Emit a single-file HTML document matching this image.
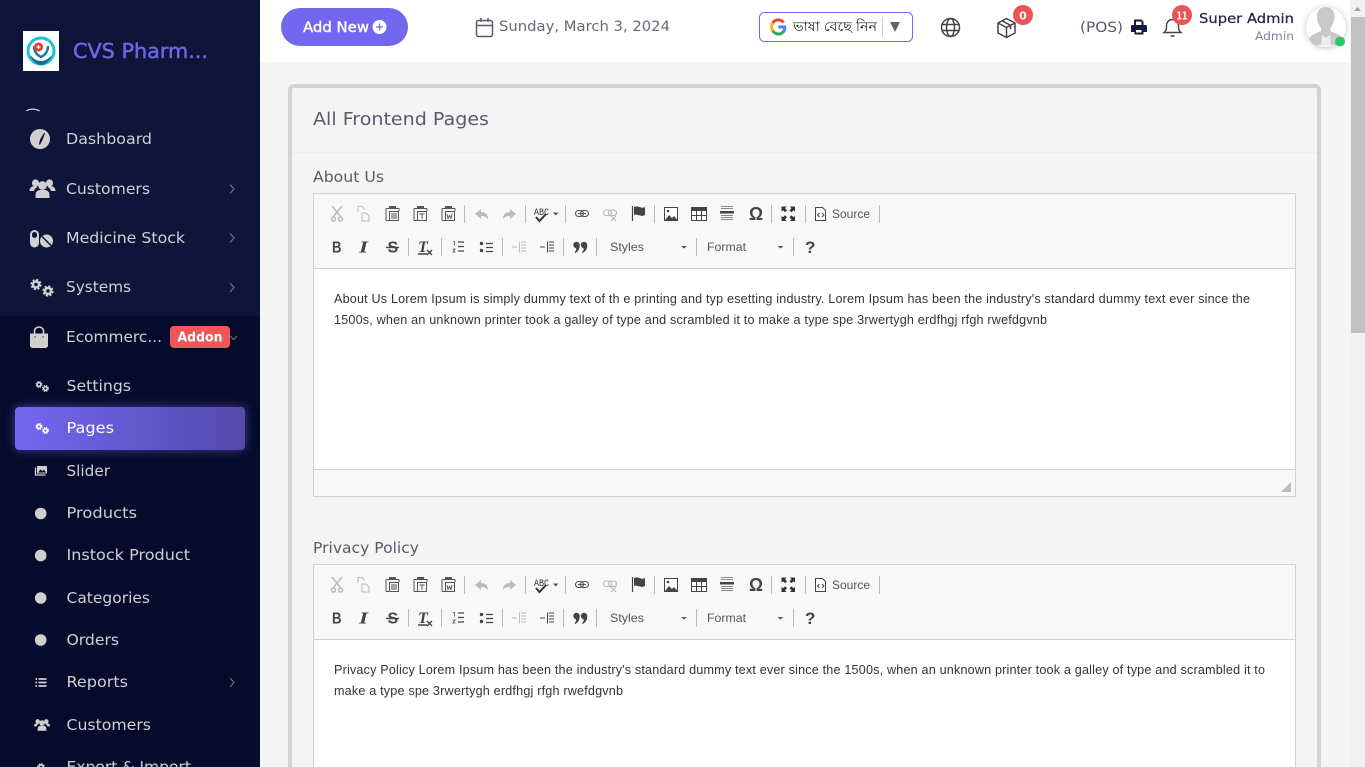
<!DOCTYPE html>
<html lang="en">
<head>
<meta charset="utf-8">
<title>All Frontend Pages</title>
<style>
html,body{margin:0;padding:0;width:1365px;height:767px;overflow:hidden;background:#f5f5f5}
svg{display:block}
text{white-space:pre}
.m{font-family:"DejaVu Sans","Liberation Sans",sans-serif}
.side{font-size:15.5px;fill:#cfcfd4}
.sub{font-size:15.5px;fill:#cfcfd4}
.e{font-family:"Liberation Sans",sans-serif;font-size:12.6px;fill:#333}
.t{font-family:"Liberation Sans",sans-serif;font-size:12px;fill:#555}
</style>
</head>
<body>
<svg xmlns="http://www.w3.org/2000/svg" width="1365" height="767" viewBox="0 0 1365 767">
<defs>
<linearGradient id="act" x1="0" x2="1" y1="0" y2="0"><stop offset="0" stop-color="#7367f0"/><stop offset="1" stop-color="#5549ad"/></linearGradient>
<g id="cog"><circle r="3" fill="none" stroke="currentColor" stroke-width="2.4"/><circle r="4.7" fill="none" stroke="currentColor" stroke-width="1.8" stroke-dasharray="2.2 1.5"/></g>
<g id="users" fill="currentColor">
<circle cx="-7" cy="-5" r="3.6"/><circle cx="7" cy="-5" r="3.6"/><circle cx="0" cy="-2.5" r="4.4"/>
<path d="M-13 3c0-3 2-5 5-5h2l1 1c-2 1-3 2-3.500 4zM13 3c0-3-2-5-5-5H6L5-1c2 1 3 2 3.500 4zM-7 10V7c0-3.500 2.500-5 5-5h4c2.500 0 5 1.500 5 5v3z"/>
</g>
<g id="tb">
<!-- row 1 -->
<g fill="none" stroke="#bbb" stroke-width="1.500">
<path d="M332 206l8.500 10.500M342 206l-8.500 10.500"/><circle cx="333.500" cy="219" r="2"/><circle cx="340.500" cy="219" r="2"/>
<path d="M358 212v-5.500h4l3 3M362 213h4l3 3v5h-7z" stroke-width="1"/>
</g>
<g fill="none" stroke="#555" stroke-width="1">
<path d="M389 208.500h-2.500c-.5 0-.5 0-.5 .5v11c0 .5 0 .5 .5 .5h3M396 208.500h2.500c.5 0 .5 0 .5 .5v2"/>
<path d="M417 208.500h-2.500c-.5 0-.5 0-.5 .5v11c0 .5 0 .5 .5 .5h3M424 208.500h2.500c.5 0 .5 0 .5 .5v2"/>
<path d="M445 208.500h-2.500c-.5 0-.5 0-.5 .5v11c0 .5 0 .5 .5 .5h3M452 208.500h2.500c.5 0 .5 0 .5 .5v2"/>
<rect x="389.500" y="211.500" width="9" height="9"/><rect x="417.500" y="211.500" width="9" height="9"/><rect x="445.500" y="211.500" width="9" height="9"/>
<path d="M391 214h6M391 216h6M391 218h6M419.500 214h5M422 214v5M447 214l1 4.500 1.500-3 1.500 3 1-4.500" stroke-width=".9"/>
</g>
<rect x="389" y="206" width="7" height="3" fill="#555"/><rect x="417" y="206" width="7" height="3" fill="#555"/><rect x="445" y="206" width="7" height="3" fill="#555"/>
<path d="M475 214l6-5v3c4 0 7 2 7 7-2-2.500-4-3-7-3v3z" fill="#bbb"/>
<path d="M516 214l-6-5v3c-4 0-7 2-7 7 2-2.500 4-3 7-3v3z" fill="#bbb"/>
<path d="M536 217l3.500 4 6.500-7" fill="none" stroke="#333" stroke-width="2"/>
<path d="M553 212.500h5.500l-2.750 3z" fill="#555"/>
<g fill="none" stroke="#555" stroke-width="1.100"><rect x="575.500" y="210.500" width="8" height="6" rx="3"/><rect x="580.500" y="210.500" width="8" height="6" rx="3"/><path d="M578 213.500h8"/></g>
<g fill="none" stroke="#bbb" stroke-width="1.100"><rect x="603.500" y="210" width="8" height="5.500" rx="2.700"/><rect x="608.500" y="210" width="8" height="5.500" rx="2.700"/><path d="M611 216l5 5M616 216l-5 5"/></g>
<path d="M632.500 206v15" stroke="#444" stroke-width="1.200"/><path d="M634 207c3-1.500 5 0 7 .5s3 0 4-.5v8c-2 1-3 1-5 .5s-4-1.500-6-.5z" fill="#444"/>
<rect x="664.500" y="207.500" width="13" height="13" fill="#fff" stroke="#444"/><path d="M665 220l4-5 3 3 2-2 3.500 4z" fill="#444"/><circle cx="668" cy="211" r="1.300" fill="#444"/>
<rect x="691.500" y="207.500" width="15" height="13" fill="#fff" stroke="#444"/><rect x="691" y="207" width="16" height="4" fill="#444"/><path d="M696.500 211v9M701.500 211v9M692 215.500h14" stroke="#444"/>
<path d="M721 206.500h12M721 208.500h12" stroke="#888"/><rect x="720" y="211" width="14" height="2.500" fill="#444"/><path d="M721 215.500h12M721 217.500h12M721 219.500h12" stroke="#888"/>
<path d="M782 207h3.500l-1.200 1.200 2 2-1.300 1.300-2-2L782 210.500zM794.500 207h-3.500l1.200 1.200-2 2 1.300 1.300 2-2 1 1zM782 220.500H785.500l-1.200-1.200 2-2-1.300-1.300-2 2-1-1zM794.500 220.500h-3.500l1.200-1.200-2-2 1.300-1.300 2 2 1-1z" fill="#333" stroke="#333"/>
<path d="M815.500 207.500h7l3 3v10h-10z" fill="#fff" stroke="#444"/><path d="M819.500 213l-2 2 2 2M822 213l2 2-2 2" fill="none" stroke="#444"/>
<!-- row 2 -->
<path d="M418 254h9" stroke="#444" stroke-width="1.500"/>
<path d="M427 250l5 5M432 250l-5 5" stroke="#444" stroke-width="1.400"/>
<path d="M386 247.500h13" stroke="#444" stroke-width="1.400"/>
<path d="M458 242h6M458 246.500h6M458 251h6M486 243.500h7M486 247.500h7M486 251.500h7" stroke="#444" stroke-width="1.300"/>
<path d="M453 241.500h1.500v4M452.500 249h2.500l-2 3h2.500" fill="none" stroke="#444" stroke-width=".8"/>
<circle cx="481.500" cy="243.500" r="1.700" fill="#444"/><circle cx="481.500" cy="250.500" r="1.700" fill="#444"/>
<g stroke="#bbb"><path d="M519.500 241.500v11M521 242h5M521 245h5M521 248h5M521 251h5M512 247h5"/></g>
<g stroke="#444"><path d="M547.500 241.500v11M549 242h5M549 245h5M549 248h5M549 251h5M540 247h5"/></g>
<circle cx="576.500" cy="245" r="3.200" fill="#444"/><circle cx="584" cy="245" r="3.200" fill="#444"/>
<path d="M579.700 245c.3 3.500-1.500 6.500-4.500 8l-.7-1c1.500-1 2-2.500 1.500-4zM587.200 245c.3 3.500-1.500 6.500-4.500 8l-.7-1c1.500-1 2-2.500 1.500-4z" fill="#444"/>
<path d="M681 246h6l-3 2.500zM777.500 246h6l-3 2.500z" fill="#555"/>
<!-- separators -->
<path d="M464.500 205v18M525.500 205v18M565.500 205v18M654.500 205v18M771.500 205v18M805.500 205v18M879.500 205v18M408.500 238v18M441.500 238v18M502.500 238v18M563.500 238v18M596.500 238v18M696.500 238v18M793.500 238v18" stroke="#bcbcbc"/>
</g>
</defs>

<!-- content background -->
<rect width="1365" height="767" fill="#f5f5f5"/>

<!-- header -->
<rect x="260" width="1090" height="62" fill="#fff"/>
<rect x="281" y="8" width="127" height="38" rx="19" fill="#7367f0"/>
<text class="m" x="303" y="32" font-size="14" fill="#fff" stroke="#fff" stroke-width=".4" textLength="66" lengthAdjust="spacingAndGlyphs">Add New</text>
<circle cx="379.500" cy="27" r="7" fill="#fff"/><path d="M376 27h7M379.500 23.500v7" stroke="#7367f0" stroke-width="1.200"/>
<g fill="none" stroke="#5d596c" stroke-width="1.500"><rect x="476.500" y="20.500" width="16" height="16" rx="2"/><path d="M476.500 25.500h16M481 18v4M488 18v4"/></g>
<text class="m" x="499" y="31" font-size="14.500" fill="#6a6778" textLength="171" lengthAdjust="spacingAndGlyphs">Sunday, March 3, 2024</text>

<rect x="759.500" y="12.500" width="153" height="29" rx="5" fill="#fff" stroke="#7367f0"/>
<g fill="none" stroke-width="3">
<path d="M783.500 22.500a6.500 6.500 0 0 0-10.800 .5" stroke="#ea4335"/>
<path d="M772.700 23a6.500 6.500 0 0 0 0 7.500" stroke="#fbbc05"/>
<path d="M772.700 30.500a6.500 6.500 0 0 0 10 2" stroke="#34a853"/>
<path d="M782.700 32.500a6.500 6.500 0 0 0 2-5.500h-6.500" stroke="#4285f4"/>
</g>
<text x="793" y="31" font-size="13.500" fill="#222" font-family="'Liberation Sans','Noto Sans CJK SC',sans-serif" textLength="84" lengthAdjust="spacingAndGlyphs">ভাষা বেছে নিন</text>
<path d="M882.500 17v20" stroke="#ccc"/>
<path d="M890 22h10l-5 10z" fill="#666"/>

<g fill="none" stroke="#444" stroke-width="1.500"><circle cx="950.500" cy="27.500" r="9"/><ellipse cx="950.500" cy="27.500" rx="4" ry="9"/><path d="M942 24.500h17M942 30.500h17"/></g>
<g fill="none" stroke="#444" stroke-width="1.500" stroke-linejoin="round"><path d="M1006.500 18.500l8.500 4.500v10l-8.500 4.500-8.500-4.500v-10zM998 23l8.500 4.500 8.500-4.500M1006.500 27.500v10M1002 20.800l8.500 4.500v4"/></g>
<circle cx="1023" cy="15" r="10" fill="#ea5455"/>
<text class="m" x="1023" y="19.500" font-size="11" font-weight="700" fill="#fff" text-anchor="middle">0</text>

<text class="m" x="1080" y="32" font-size="14.500" fill="#5d596c" textLength="43" lengthAdjust="spacingAndGlyphs">(POS)</text>
<path d="M1134 25v-5.500h7.500l2 2V25h2c1 0 1.500.7 1.500 1.500V32h-3.500v2.500h-9V32H1131v-5.500c0-.8.500-1.500 1.500-1.500zm2-3.500V25h5.500v-3.500zm0 8.500v2.500h5.500V30z" fill="#14193f" fill-rule="evenodd"/>
<g fill="none" stroke="#444" stroke-width="1.400"><path d="M1164 32.500c2-1.500 2.500-3 2.500-7a6 6 0 0 1 12 0c0 4 .5 5.500 2.500 7z"/><path d="M1170.500 36h4" stroke-width="1.500"/></g>
<circle cx="1182" cy="15" r="10" fill="#ea5455"/>
<text class="m" x="1182" y="19.500" font-size="10.500" font-weight="700" fill="#fff" text-anchor="middle" textLength="11" lengthAdjust="spacingAndGlyphs">11</text>
<text class="m" x="1199" y="23" font-size="13.500" fill="#1c2248" stroke="#1c2248" stroke-width=".2" textLength="95" lengthAdjust="spacingAndGlyphs">Super Admin</text>
<text class="m" x="1255" y="40" font-size="11.500" fill="#85849a" textLength="39" lengthAdjust="spacingAndGlyphs">Admin</text>
<circle cx="1326" cy="27" r="20" fill="#fff" style="filter:drop-shadow(0 1px 3px rgba(0,0,0,.25))"/>
<path d="M1326 7c5.500 0 8.500 4 8.500 9.500 0 5-2 9-4 11.500v3l9 4 3 4-4.500 6h-24.500l-4.500-6 3-4 9-4v-3c-2-2.500-4-6.500-4-11.500 0-5.500 3-9.500 8.500-9.500z" fill="#c9c9c9"/>
<path d="M1322 35l4 3 4-3 1 11h-10z" fill="#eee"/>
<circle cx="1340" cy="41.500" r="5" fill="#28c76f"/>

<!-- scrollbar -->
<rect x="1350" width="15" height="767" fill="#f1f1f1"/>
<rect x="1351" y="17" width="14" height="316" fill="#c1c1c1"/>
<path d="M1354 11l3.500-4 3.500 4z" fill="#a3a3a3"/>

<!-- card -->
<rect x="290" y="86" width="1029" height="700" rx="4" fill="#f5f5f5" stroke="#d0d4d3" stroke-width="4"/>
<path d="M292 152.500h1025" stroke="#ededed"/>
<text class="m" x="313" y="125" font-size="17.500" fill="#5d596c" textLength="176" lengthAdjust="spacingAndGlyphs">All Frontend Pages</text>

<text class="m" x="313" y="182" font-size="15" fill="#5d596c" textLength="71" lengthAdjust="spacingAndGlyphs">About Us</text>
<rect x="313.500" y="193.500" width="982" height="303" fill="#f8f8f8" stroke="#d1d1d1"/>
<rect x="314" y="268.500" width="981" height="201" fill="#fff"/>
<path d="M314 268.500h981M314 469.500h981" stroke="#d1d1d1"/>
<path d="M1291 482v10h-10z" fill="#bdbdbd"/>
<use href="#tb"/>
<text font-family="Liberation Mono,monospace" font-size="10.500" fill="#333" x="534" y="215" textLength="15" lengthAdjust="spacingAndGlyphs">ABC</text>
<text font-family="Liberation Sans,sans-serif" font-size="18" font-weight="700" fill="#444" x="749" y="220" textLength="14" lengthAdjust="spacingAndGlyphs">Ω</text>
<text class="t" x="832" y="218" textLength="38" lengthAdjust="spacingAndGlyphs">Source</text>
<text font-family="Liberation Sans,sans-serif" font-size="16" font-weight="700" fill="#444" x="332" y="252.500" textLength="9.500" lengthAdjust="spacingAndGlyphs">B</text>
<text font-family="Liberation Serif,serif" font-size="17" font-weight="700" font-style="italic" fill="#444" x="359" y="252.500" textLength="9" lengthAdjust="spacingAndGlyphs">I</text>
<text font-family="Liberation Sans,sans-serif" font-size="16" font-weight="700" fill="#444" x="387.500" y="252.500">S</text>
<text font-family="Liberation Serif,serif" font-size="16" font-weight="700" font-style="italic" fill="#444" x="418" y="252">T</text>
<text class="t" x="610" y="251" textLength="34" lengthAdjust="spacingAndGlyphs">Styles</text>
<text class="t" x="707" y="251" textLength="39" lengthAdjust="spacingAndGlyphs">Format</text>
<text font-family="Liberation Sans,sans-serif" font-size="17" font-weight="700" fill="#444" x="805" y="253">?</text>
<text class="e" x="334" y="303" textLength="916" lengthAdjust="spacing">About Us Lorem Ipsum is simply dummy text of th e printing and typ esetting industry. Lorem Ipsum has been the industry's standard dummy text ever since the</text>
<text class="e" x="334" y="324" textLength="713" lengthAdjust="spacing">1500s, when an unknown printer took a galley of type and scrambled it to make a type spe 3rwertygh erdfhgj rfgh rwefdgvnb</text>

<text class="m" x="313" y="553" font-size="15" fill="#5d596c" textLength="106" lengthAdjust="spacingAndGlyphs">Privacy Policy</text>
<rect x="313.500" y="564.500" width="982" height="260" fill="#f8f8f8" stroke="#d1d1d1"/>
<rect x="314" y="639.500" width="981" height="185" fill="#fff"/>
<path d="M314 639.500h981" stroke="#d1d1d1"/>
<use href="#tb" y="371"/>
<text font-family="Liberation Mono,monospace" font-size="10.500" fill="#333" x="534" y="586" textLength="15" lengthAdjust="spacingAndGlyphs">ABC</text>
<text font-family="Liberation Sans,sans-serif" font-size="18" font-weight="700" fill="#444" x="749" y="591" textLength="14" lengthAdjust="spacingAndGlyphs">Ω</text>
<text class="t" x="832" y="589" textLength="38" lengthAdjust="spacingAndGlyphs">Source</text>
<text font-family="Liberation Sans,sans-serif" font-size="16" font-weight="700" fill="#444" x="332" y="623.500" textLength="9.500" lengthAdjust="spacingAndGlyphs">B</text>
<text font-family="Liberation Serif,serif" font-size="17" font-weight="700" font-style="italic" fill="#444" x="359" y="623.500" textLength="9" lengthAdjust="spacingAndGlyphs">I</text>
<text font-family="Liberation Sans,sans-serif" font-size="16" font-weight="700" fill="#444" x="387.500" y="623.500">S</text>
<text font-family="Liberation Serif,serif" font-size="16" font-weight="700" font-style="italic" fill="#444" x="418" y="623">T</text>
<text class="t" x="610" y="622" textLength="34" lengthAdjust="spacingAndGlyphs">Styles</text>
<text class="t" x="707" y="622" textLength="39" lengthAdjust="spacingAndGlyphs">Format</text>
<text font-family="Liberation Sans,sans-serif" font-size="17" font-weight="700" fill="#444" x="805" y="624">?</text>
<text class="e" x="334" y="674" textLength="931" lengthAdjust="spacing">Privacy Policy Lorem Ipsum has been the industry's standard dummy text ever since the 1500s, when an unknown printer took a galley of type and scrambled it to</text>
<text class="e" x="334" y="695" textLength="289" lengthAdjust="spacing">make a type spe 3rwertygh erdfhgj rfgh rwefdgvnb</text>

<!-- sidebar -->
<rect width="260" height="767" fill="#0f1539"/>
<rect y="316" width="260" height="451" fill="#060b2b"/>
<rect x="23" y="31" width="36" height="40" fill="#fff"/>
<circle cx="41" cy="51" r="13" fill="none" stroke="#1ec2d8" stroke-width="3"/>
<path d="M30 55c3 8 8 10 11 10s8-2 11-10c-3 3-6 6-11 6s-8-3-11-6z" fill="#14708a"/>
<path d="M34 46c0 6 3 9 7 11 4-2 7-5 7-11" fill="none" stroke="#1d8296" stroke-width="2.500"/>
<circle cx="38.500" cy="47" r="4.500" fill="#e53935"/><path d="M36.500 47h4M38.500 45v4" stroke="#fff" stroke-width="1.200"/>
<text class="m" x="73" y="58" font-size="20.500" fill="#6a66e6" stroke="#6a66e6" stroke-width=".5" textLength="135" lengthAdjust="spacingAndGlyphs">CVS Pharm...</text>
<path d="M26.500 111c3-2.500 9-2.500 13 0" fill="none" stroke="#cfcfd4" stroke-width="1.200"/>

<!-- main icons -->
<circle cx="40" cy="139" r="10" fill="#d0d0d0"/><path d="M44.500 133l-4 6.500-1 5 2.500-4.500z" fill="#0f1539" stroke="#0f1539"/>
<use href="#users" x="42.500" y="188" color="#d0d0d0"/>
<rect x="30" y="230" width="9" height="17.500" rx="4.500" fill="#d0d0d0"/><rect x="32" y="232" width="5" height="6" rx="2.500" fill="#0f1539"/>
<circle cx="46.500" cy="241" r="6.500" fill="#d0d0d0"/><path d="M42 236.500l9 9" stroke="#0f1539" stroke-width="1.500"/>
<use href="#cog" x="36" y="284.500" color="#d0d0d0"/>
<use href="#cog" x="48" y="291" color="#d0d0d0"/>
<path d="M30.500 334h17v11.500a2 2 0 0 1-2 2h-13a2 2 0 0 1-2-2z" fill="#d0d0d0" stroke="#d0d0d0" stroke-linejoin="round"/>
<path d="M34.500 337v-6a4.500 4 0 0 1 9 0v6" fill="none" stroke="#d0d0d0" stroke-width="1.600"/>
<path d="M35 336.500v1M43 336.500v1" stroke="#060b2b" stroke-width="1.200"/>

<g fill="none" stroke="#6b6f86" stroke-width="1.200">
<path d="M230 184.500l4 4.500-4 4.500M230 233.500l4 4.500-4 4.500M230 283l4 4.500-4 4.500M230 678l4 4.500-4 4.500"/>
<path d="M230 336l3.500 3.500 3.500-3.500"/>
</g>

<text class="m side" x="66" y="144" textLength="86" lengthAdjust="spacingAndGlyphs">Dashboard</text>
<text class="m side" x="66" y="194" textLength="84" lengthAdjust="spacingAndGlyphs">Customers</text>
<text class="m side" x="66" y="243" textLength="119" lengthAdjust="spacingAndGlyphs">Medicine Stock</text>
<text class="m side" x="66" y="292" textLength="65" lengthAdjust="spacingAndGlyphs">Systems</text>
<text class="m side" x="66" y="342" textLength="96" lengthAdjust="spacingAndGlyphs">Ecommerc...</text>
<rect x="170" y="326" width="60" height="22" rx="4" fill="#ef5658"/>
<text class="m" x="177.500" y="341.500" font-size="13" font-weight="700" fill="#fff" textLength="45" lengthAdjust="spacingAndGlyphs">Addon</text>

<rect x="15" y="407" width="230" height="43" rx="4" fill="url(#act)" style="filter:drop-shadow(0 0 5px rgba(115,103,240,.55))"/>

<use href="#cog" transform="translate(39 384.500) scale(.62)" color="#d8d8d8"/>
<use href="#cog" transform="translate(45.500 388.500) scale(.62)" color="#d8d8d8"/>
<use href="#cog" transform="translate(39 426.500) scale(.62)" color="#fff"/>
<use href="#cog" transform="translate(45.500 430.500) scale(.62)" color="#fff"/>
<rect x="37" y="466" width="10" height="7.500" fill="#d0d0d0"/><path d="M35.500 467.500V475h10" fill="none" stroke="#d0d0d0" stroke-width="1.300"/><path d="M38 472.500l2.500-3 2 1.500 1.500-1.500 2 3z" fill="#060b2b"/>
<circle cx="40.700" cy="513.500" r="5.800" fill="#d0d0d0"/>
<circle cx="40.700" cy="555.500" r="5.800" fill="#d0d0d0"/>
<circle cx="40.700" cy="598" r="5.800" fill="#d0d0d0"/>
<circle cx="40.700" cy="640" r="5.800" fill="#d0d0d0"/>
<path d="M38.500 679h8M38.500 682.500h8M38.500 686h8M35.500 679h1.500M35.500 682.500h1.500M35.500 686h1.500" stroke="#d0d0d0" stroke-width="1.800"/>
<use href="#users" transform="translate(42 724.500) scale(.62)" color="#d0d0d0"/>
<use href="#cog" transform="translate(41 767) scale(.7)" color="#d0d0d0"/>

<text class="m sub" x="66.500" y="391" textLength="64.500" lengthAdjust="spacingAndGlyphs">Settings</text>
<text class="m sub" x="66.500" y="433" style="fill:#fff" textLength="47.500" lengthAdjust="spacingAndGlyphs">Pages</text>
<text class="m sub" x="66.500" y="476" textLength="43.500" lengthAdjust="spacingAndGlyphs">Slider</text>
<text class="m sub" x="66.500" y="518" textLength="70.500" lengthAdjust="spacingAndGlyphs">Products</text>
<text class="m sub" x="66.500" y="560" textLength="123.500" lengthAdjust="spacingAndGlyphs">Instock Product</text>
<text class="m sub" x="66.500" y="603" textLength="83.500" lengthAdjust="spacingAndGlyphs">Categories</text>
<text class="m sub" x="66.500" y="645" textLength="52.500" lengthAdjust="spacingAndGlyphs">Orders</text>
<text class="m sub" x="66.500" y="687" textLength="61.500" lengthAdjust="spacingAndGlyphs">Reports</text>
<text class="m sub" x="66.500" y="730" textLength="84.500" lengthAdjust="spacingAndGlyphs">Customers</text>
<text class="m sub" x="66.500" y="772" textLength="124.500" lengthAdjust="spacingAndGlyphs">Export &amp; Import</text>
</svg>
</body>
</html>
